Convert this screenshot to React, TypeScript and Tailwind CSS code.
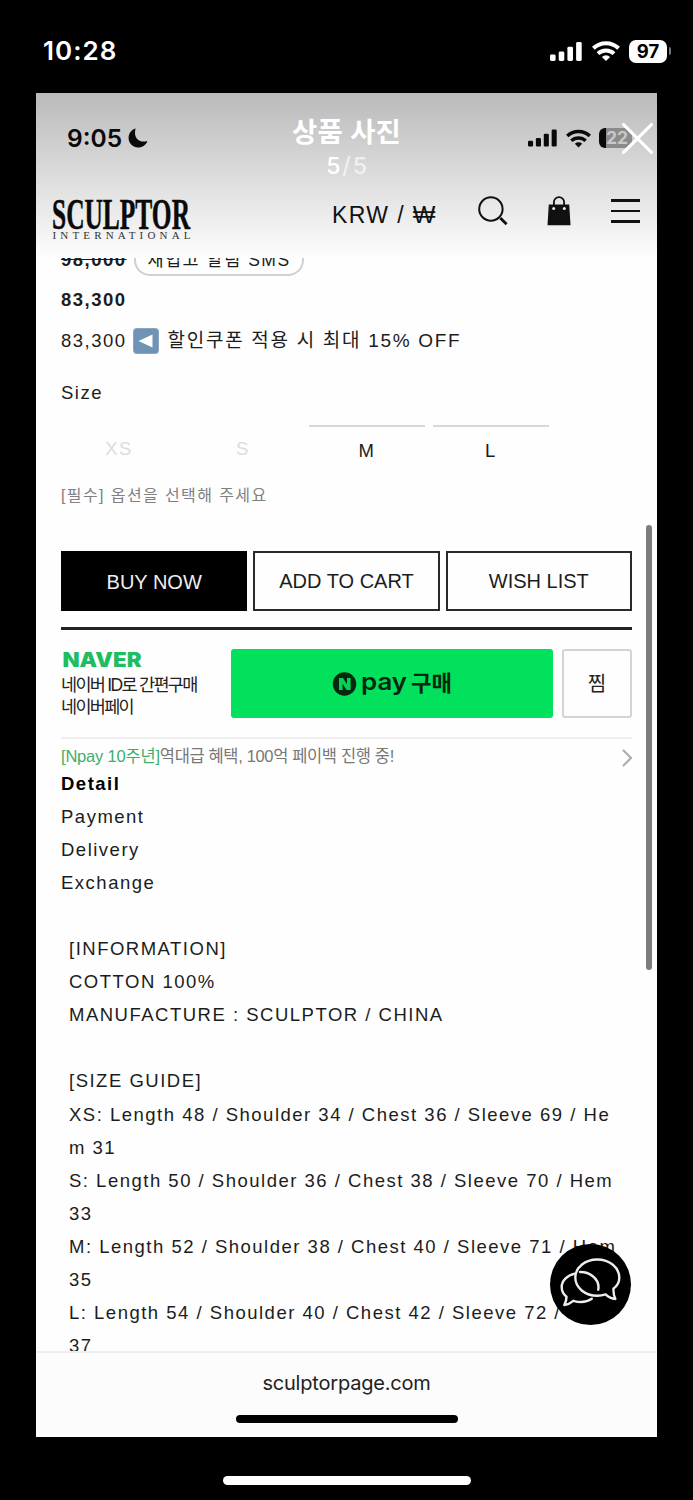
import React from "react";

const INFO_LINES = [
  "[INFORMATION]",
  "COTTON 100%",
  "MANUFACTURE : SCULPTOR / CHINA",
  "",
  "[SIZE GUIDE]",
  "XS: Length 48 / Shoulder 34 / Chest 36 / Sleeve 69 / He",
  "m 31",
  "S: Length 50 / Shoulder 36 / Chest 38 / Sleeve 70 / Hem",
  "33",
  "M: Length 52 / Shoulder 38 / Chest 40 / Sleeve 71 / Hem",
  "35",
  "L: Length 54 / Shoulder 40 / Chest 42 / Sleeve 72 / Hem",
  "37",
];

const TABS = ["Detail", "Payment", "Delivery", "Exchange"];

const SIZES = [
  { label: "XS", soldOut: true },
  { label: "S", soldOut: true },
  { label: "M", soldOut: false },
  { label: "L", soldOut: false },
];

function SignalIcon({ className }: { className?: string }) {
  return (
    <svg viewBox="0 0 32 19" className={className} fill="currentColor">
      <rect x="0" y="12.5" width="5.6" height="6.5" rx="1.4" />
      <rect x="8.7" y="9.5" width="5.6" height="9.5" rx="1.4" />
      <rect x="17.4" y="4.8" width="5.6" height="14.2" rx="1.4" />
      <rect x="26.1" y="0" width="5.6" height="19" rx="1.4" />
    </svg>
  );
}

function WifiIcon({ className }: { className?: string }) {
  return (
    <svg viewBox="0 0 28 20" className={className} fill="none" stroke="currentColor" strokeWidth="4">
      <path d="M1.4 7.2a18.2 18.2 0 0 1 25.2 0" />
      <path d="M6 12.6a11.6 11.6 0 0 1 16 0" />
      <path d="M14 20l-4.1-4.1a6 6 0 0 1 8.2 0z" fill="currentColor" stroke="none" />
    </svg>
  );
}

function Logo() {
  return (
    <svg viewBox="0 0 142 46" className="w-[142px] h-[46px]" fontFamily="Liberation Serif, serif" fill="#0a0a0a">
      <text x="0" y="32" fontSize="45" fontWeight="700" textLength="138" lengthAdjust="spacingAndGlyphs" stroke="#0a0a0a" strokeWidth="0.5">SCULPTOR</text>
      <text x="0.5" y="41.5" fontSize="11" textLength="138" fill="#333">INTERNATIONAL</text>
    </svg>
  );
}

function StatusBar() {
  return (
    <div className="h-[93px] pt-[2px] pl-[43px] pr-[21px] flex items-start justify-between text-white">
      <span className="mt-[32px] text-[26px] leading-[34px] font-semibold tracking-[1px] font-['Inter',sans-serif]">10:28</span>
      <div className="flex items-center mt-[37px] mr-[1px] h-[24px]">
        <SignalIcon className="w-[32px] h-[19px]" />
        <WifiIcon className="w-[28px] h-[20px] ml-[9.5px]" />
        <span className="ml-[9.5px] w-[38px] h-[23px] rounded-[7px] bg-white text-black text-center text-[18.5px] leading-[23px] font-bold font-['Inter',sans-serif]">97</span>
        <span className="ml-[2px] w-[2px] h-[8px] rounded-r-full bg-[#777]" />
      </div>
    </div>
  );
}

function ShotStatusBar() {
  return (
    <div className="h-[90px] pl-[31px] pr-[25px] flex items-center justify-between text-[#0a0a0a]">
      <div className="flex items-center">
        <span className="text-[24.5px] leading-[30px] font-semibold font-['Inter',sans-serif]">9:05</span>
        <svg viewBox="0 0 20 20" className="w-[20px] h-[20px] ml-[6px]" fill="currentColor">
          <path d="M7.6 0.6C3.5 1.9 0.6 5.4 0.6 10c0 5.3 4.2 9.4 9.5 9.4 4.4 0 8-2.6 9.3-6.5-1.3.5-2.5.7-3.8.7C10.8 13.6 7 10.2 7 5.3c0-1.7.2-3.3.6-4.7z" />
        </svg>
      </div>
      <div className="flex items-center">
        <SignalIcon className="w-[29px] h-[18px]" />
        <WifiIcon className="w-[25px] h-[19px] ml-[9px]" />
        <span className="ml-[8.5px] w-[33px] h-[20px] rounded-[6px] bg-gradient-to-r from-[#0a0a0a] from-[22%] to-[#8b8b8b] to-[22%] text-[#c9c9c9] text-[17.5px] leading-[20px] pl-[7px] font-bold font-['Inter',sans-serif]">22</span>
      </div>
    </div>
  );
}

function SiteHeader() {
  return (
    <header className="h-[75px] flex items-start pl-[16px] text-[#111]">
      <div className="mt-[14px]"><Logo /></div>
      <span className="ml-[138px] mt-[18px] w-[110px] whitespace-nowrap text-[23px] leading-[28px] tracking-[1.4px] font-['Liberation_Sans',sans-serif]">
        KRW / <span className="text-[24px]">₩</span>
      </span>
      <svg viewBox="0 0 30 30" className="ml-[36px] mt-[13px] w-[30px] h-[30px]" fill="none" stroke="currentColor">
        <circle cx="12.9" cy="13" r="11.7" strokeWidth="2" />
        <path d="M22.3 22l6.3 6.2" strokeWidth="2.8" />
      </svg>
      <svg viewBox="0 0 24 30" className="ml-[39px] mt-[13px] w-[24px] h-[30px]" fill="currentColor">
        <path d="M1.8 8.4h20.4l1.3 20.9H.5z" />
        <path d="M6.9 9V6.2a5.1 5.1 0 0 1 10.2 0V9" fill="none" stroke="currentColor" strokeWidth="1.8" />
        <circle cx="6.7" cy="12.5" r="1.5" fill="#eee" />
        <circle cx="17.3" cy="12.5" r="1.5" fill="#eee" />
      </svg>
      <div className="ml-[40px] mt-[16px] w-[29px] flex flex-col gap-[8px]">
        <span className="h-[2.5px] bg-[#111]" />
        <span className="h-[2.5px] bg-[#111]" />
        <span className="h-[2.5px] bg-[#111]" />
      </div>
    </header>
  );
}

function NaverPay() {
  return (
    <div className="mt-[19px] flex h-[69px]">
      <div className="w-[170px] text-[#222] text-[17.5px] leading-[22px] tracking-[-1.7px]">
        <svg viewBox="0 0 82 22" className="w-[82px] h-[22px] block" fill="#1fbd62">
          <text x="1.5" y="17.7" fontSize="20" fontWeight="900" fontFamily="Inter, sans-serif" letterSpacing="0" textLength="79" lengthAdjust="spacingAndGlyphs">NAVER</text>
        </svg>
        <p className="mt-[3px]">네이버 ID로 간편구매</p>
        <p>네이버페이</p>
      </div>
      <button className="w-[322px] rounded-[3px] bg-[#02e15c] flex items-center justify-center">
        <svg viewBox="0 0 120 30" className="w-[120px] h-[30px]" fill="#06280f">
          <circle cx="12.5" cy="15" r="11.7" />
          <path d="M7 21V9h4l4 6.2V9h3.6v12h-3.900l-4.100-6.200V21z" fill="#02d458" />
          <text x="29" y="20.5" fontSize="24" fontWeight="600" fontFamily="Inter, sans-serif" letterSpacing="0" textLength="46" lengthAdjust="spacingAndGlyphs">pay</text>
          <text x="79" y="22" fontSize="22" fontWeight="700" fontFamily="Noto Sans CJK KR, sans-serif" letterSpacing="0" textLength="41" lengthAdjust="spacingAndGlyphs">구매</text>
        </svg>
      </button>
      <button className="ml-[9px] w-[70px] rounded-[3px] border-2 border-[#d4d4d4] text-[20px] text-[#222] tracking-normal">찜</button>
    </div>
  );
}

function ChatButton() {
  return (
    <button className="absolute left-[514px] top-[1151px] w-[81px] h-[81px] rounded-full bg-black">
      <svg viewBox="0 0 81 81" className="w-[81px] h-[81px]" fill="none" stroke="#eee" strokeWidth="2.4" strokeLinejoin="round" strokeLinecap="round">
        <path d="M63.5 44.500C67.2 42 69.3 38.2 69.3 33.8 69.3 23.5 59.5 15.500 47.3 15.500S25.300 23.500 25.300 33.600s9.800 18.200 22 18.200c3 0 5.700-.5 8.300-1.400 2.700 2.600 6 4.300 9.800 4.600-1.500-3-2.200-6.500-1.900-10.500z" />
        <path d="M25 29.700C17 31.500 11.700 36.700 11.700 43.200c0 3.700 1.700 7 4.800 9.500.1 3-.8 5.700-2.200 8.300 3.500-.5 6.500-2 9-4.200 6 1.800 13.500 1.500 18.500-2" />
        <path d="M30 28c9.500-.3 18.500 6.500 18.500 15 0 1-.1 1.800-.3 2.700" />
      </svg>
    </button>
  );
}

function ViewerOverlay() {
  return (
    <>
      <div className="absolute inset-x-0 top-[21px] flex flex-col items-center text-white">
        <h1 className="mt-[1px] text-[27.5px] leading-[35px] font-bold whitespace-nowrap">상품 사진</h1>
        <p className="ml-[2px] text-[23px] leading-[32px] tracking-[1.8px] font-medium font-['Inter',sans-serif]">
          5<span className="text-[#f0f0f0]">/5</span>
        </p>
      </div>
      <svg viewBox="0 0 30 30" className="absolute left-[586px] top-[30px] w-[31px] h-[31px]" stroke="#fff" strokeWidth="3" strokeLinecap="round">
        <path d="M1.5 1.5l27 27M28.5 1.5l-27 27" />
      </svg>
    </>
  );
}

export default function App() {
  return (
    <div className="w-[693px] h-[1500px] bg-black overflow-hidden flex flex-col font-['Liberation_Sans','Noto_Sans_CJK_KR',sans-serif]">
      <StatusBar />
      <main className="relative ml-[36px] w-[621px] h-[1344px] shrink-0 overflow-hidden flex flex-col bg-[#fefefe]">
        <div className="bg-linear-to-b from-[#bababa] via-[#dedede] via-[53%] to-[#fdfdfd] shrink-0">
          <ShotStatusBar />
          <SiteHeader />
        </div>

        <section className="h-[1093px] shrink-0 overflow-hidden pl-[25px] pr-[25px] text-[18.5px] text-[#1c1c1c] tracking-[1.5px]">
          <div className="-mt-[16px] h-[34px] flex items-start">
            <s className="leading-[36px] w-[73px] font-bold">98,000</s>
            <span className="h-[34px] w-[170px] rounded-[16px] border-2 border-[#d0d0d0] text-center text-[17.5px] leading-[32px] whitespace-nowrap">재입고 알림 SMS</span>
          </div>
          <p className="mt-[7px] leading-[33px] font-bold">83,300</p>
          <div className="mt-[8px] h-[34px] flex items-center whitespace-nowrap">
            <span>83,300</span>
            <svg viewBox="0 0 26 26" className="ml-[6px] w-[26px] h-[26px]">
              <rect x="0.5" y="0.5" width="25" height="25" rx="3" fill="#6f93b5" stroke="#8ba7bf" />
              <path d="M19.5 6.500v13L5.500 13z" fill="#fff" />
            </svg>
            <span className="ml-[9px] text-[19px] tracking-[1.7px]">할인쿠폰 적용 시 최대 15% OFF</span>
          </div>
          <p className="mt-[18px] leading-[34px]">Size</p>

          <div className="mt-[15px] grid grid-cols-[repeat(4,116px)] gap-[8px] h-[50px]">
            {SIZES.map((s) => (
              <div
                key={s.label}
                className={`border-t-2 text-center ${s.soldOut ? "leading-[44px] border-transparent text-[#dcdcdc]" : "leading-[47px] border-[#d8d8d8]"}`}
              >
                {s.label}
              </div>
            ))}
          </div>
          <p className="mt-[6px] leading-[30px] text-[16px] tracking-[1.4px] text-[#808080]">[필수] 옵션을 선택해 주세요</p>

          <div className="mt-[40px] grid grid-cols-3 gap-[6px] h-[60px] text-[20px] tracking-normal">
            <button className="bg-black text-[#eee] pt-[2px]">BUY NOW</button>
            <button className="border-2 border-[#2a2a2a]">ADD TO CART</button>
            <button className="border-2 border-[#2a2a2a]">WISH LIST</button>
          </div>
          <div className="mt-[16px] h-[3px] bg-[#222]" />

          <NaverPay />

          <div className="mt-[19px] border-t-2 border-[#eee] h-[30px] flex items-center justify-between text-[16.5px] tracking-[-0.35px] text-[#777]">
            <p className="pt-[6px]"><span className="text-[#3fae68] tracking-[-0.2px]">[Npay 10주년]</span>역대급 혜택, 100억 페이백 진행 중!</p>
            <svg viewBox="0 0 10 18" className="w-[10px] h-[18px] mt-[9px]" fill="none" stroke="#aaa" strokeWidth="2">
              <path d="M1 1l8 8-8 8" />
            </svg>
          </div>

          <ul className="leading-[33.1px]">
            {TABS.map((tab, i) => (
              <li key={tab} className={i === 0 ? "font-bold text-black" : ""}>{tab}</li>
            ))}
          </ul>

          <div className="mt-[32.7px] pl-[8px] leading-[33.1px] whitespace-nowrap">
            {INFO_LINES.map((line, i) => (
              <p key={i} className="h-[33.1px]">{line}</p>
            ))}
          </div>
        </section>

        <footer className="relative h-[86px] shrink-0 border-t-2 border-[#eee] bg-[#fcfcfc] flex flex-col items-center">
          <span className="mt-[16px] text-[20px] leading-[28px] tracking-[-0.2px] text-[#222] font-['Inter',sans-serif]">sculptorpage.com</span>
          <span className="mt-[18px] w-[222px] h-[8px] rounded-full bg-black" />
        </footer>

        <div className="absolute left-[610px] top-[432px] w-[6px] h-[445px] rounded-full bg-[#7d7d7d]" />
        <ChatButton />
        <ViewerOverlay />
      </main>
      <div className="mt-[39px] mx-auto w-[248px] h-[9px] shrink-0 rounded-full bg-white" />
    </div>
  );
}
